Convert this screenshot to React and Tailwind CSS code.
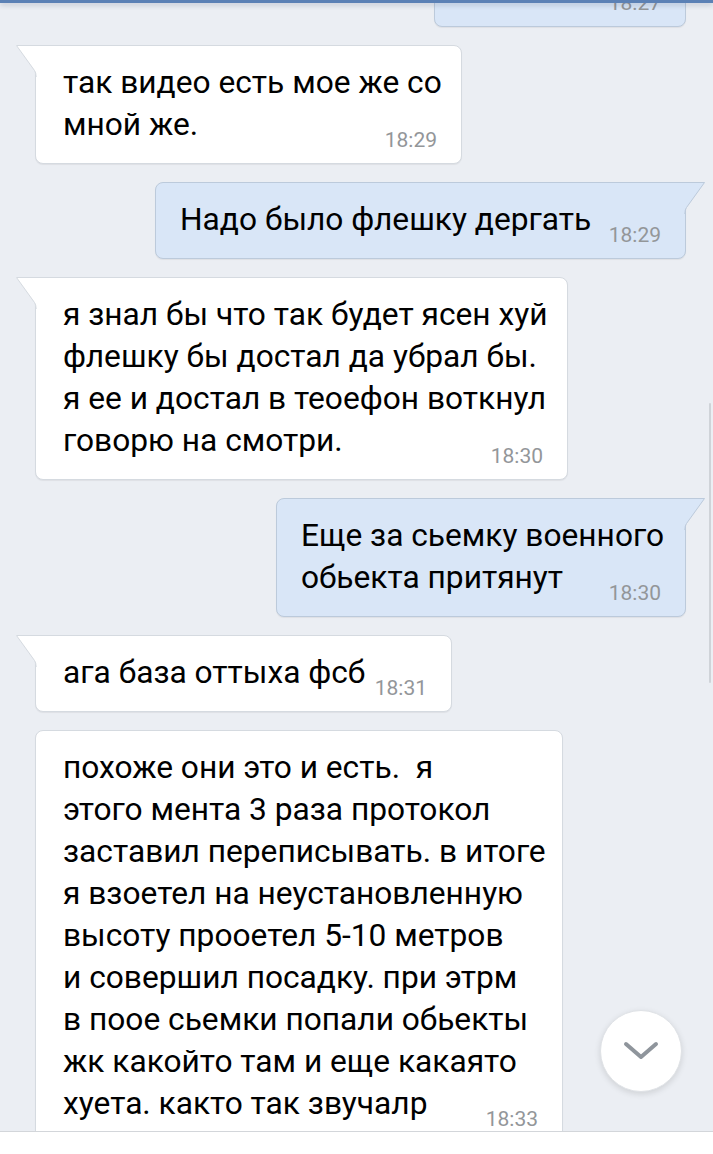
import React from 'react';

const messages = [
  { out: true, w: 'w-[252px]', lines: [''], time: '18:27', mt: '-mt-[53px]' },
  { out: false, w: 'w-[427px]', lines: ['так видео есть мое же со', 'мной же.'], time: '18:29' },
  { out: true, w: 'w-[531px]', lines: ['Надо было флешку дергать'], time: '18:29' },
  {
    out: false,
    w: 'w-[533px]',
    lines: [
      'я знал бы что так будет ясен хуй',
      'флешку бы достал да убрал бы.',
      'я ее и достал в теоефон воткнул',
      'говорю на смотри.',
    ],
    time: '18:30',
  },
  { out: true, w: 'w-[410px]', lines: ['Еще за сьемку военного', 'обьекта притянут'], time: '18:30' },
  { out: false, w: 'w-[417px]', lines: ['ага база оттыха фсб'], time: '18:31' },
  {
    out: false,
    noTail: true,
    w: 'w-[528px]',
    lines: [
      'похоже они это и есть.  я',
      'этого мента 3 раза протокол',
      'заставил переписывать. в итоге',
      'я взоетел на неустановленную',
      'высоту прооетел 5-10 метров',
      'и совершил посадку. при этрм',
      'в пooе сьемки попали обьекты',
      'жк какойто там и еще какаято',
      'хуета. както так звучалр',
    ],
    time: '18:33',
  },
];

function Tail({ out }) {
  if (out) {
    return (
      <svg className="absolute -right-[21px] -top-px" width="22" height="32" viewBox="0 0 22 32">
        <path d="M0 0 H21 L2 26 Q1 28 1 32 H0 Z" fill="#d9e6f7" />
        <path d="M0 0.5 H20.5 L2.5 25.5 Q1 27.5 0.8 32" fill="none" stroke="#bccadb" strokeWidth="1" />
      </svg>
    );
  }
  return (
    <svg className="absolute -left-[21px] -top-px" width="22" height="32" viewBox="0 0 22 32">
      <path d="M22 0 H1 L20 26 Q21 28 21 32 H22 Z" fill="#ffffff" />
      <path d="M22 0.5 H1.5 L19.5 25.5 Q21 27.5 21.2 32" fill="none" stroke="#d5dae0" strokeWidth="1" />
    </svg>
  );
}

function Bubble({ m }) {
  const side = m.out
    ? 'self-end mr-[27px] bg-[#d9e6f7] border-[#bccadb] pl-[24px] rounded-tr-none'
    : 'self-start ml-[35px] bg-white border-[#d5dae0] pl-[27px]';
  const corner = !m.out && !m.noTail ? 'rounded-tl-none' : '';
  const last = m.lines.length - 1;
  return (
    <div className={`relative shrink-0 rounded-lg border pr-[24px] pt-[16px] pb-[17px] shadow-[0_1px_1px_rgba(0,0,0,0.06)] ${side} ${corner} ${m.w} ${m.mt || ''}`}>
      {!m.noTail && <Tail out={m.out} />}
      <div className="text-[31.7px] leading-[42px] text-black">
        {m.lines.slice(0, last).map((l, i) => (
          <div key={i} className="whitespace-pre">{l}</div>
        ))}
        <div className="flex items-end">
          <span className="whitespace-pre">{m.lines[last] || '\u00a0'}</span>
          <span className="-mb-[4px] ml-auto text-[21px] leading-5 text-[#939699]">{m.time}</span>
        </div>
      </div>
    </div>
  );
}

export default function App() {
  return (
    <div className="relative flex h-[1154px] w-[713px] flex-col overflow-hidden bg-[#ebeef3] font-['Roboto',sans-serif]">
      {/* header strip + shadow */}
      <div className="relative z-10 h-[3px] shrink-0 bg-[#5b81b5] shadow-[0_2px_5px_rgba(40,60,90,0.25)]" />

      <div className="flex h-[1128px] shrink-0 flex-col gap-[18px] overflow-hidden">
        {messages.map((m, i) => (
          <Bubble key={i} m={m} />
        ))}
      </div>

      {/* bottom bar */}
      <div className="flex-1 border-t border-[#d3d6da] bg-white" />

      {/* scrollbar */}
      <div className="absolute right-[2px] top-[403px] h-[280px] w-[2px] rounded bg-[#cfd3d8]" />

      {/* scroll down button */}
      <button className="absolute left-[600px] top-[1010px] flex h-[82px] w-[82px] items-center justify-center rounded-full border border-[#dfe2e6] bg-white shadow-[0_2px_6px_rgba(0,0,0,0.12)]">
        <svg width="36" height="20" viewBox="0 0 36 20">
          <path d="M3 3 L18 16 L33 3" fill="none" stroke="#8f959c" strokeWidth="4" strokeLinecap="round" strokeLinejoin="round" />
        </svg>
      </button>
    </div>
  );
}
